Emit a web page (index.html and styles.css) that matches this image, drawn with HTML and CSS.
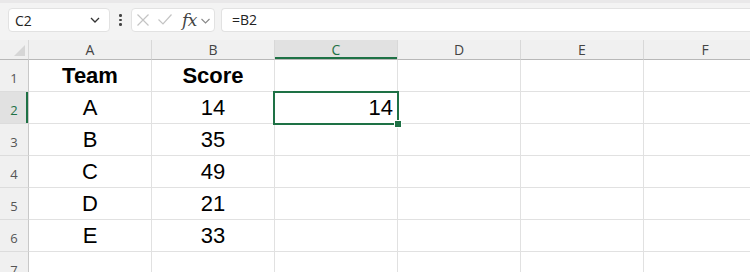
FILE: index.html
```html
<!DOCTYPE html>
<html>
<head>
<meta charset="utf-8">
<link rel="stylesheet" href="styles.css">
</head>
<body>
<div class="app">
  <div class="topbar">
    <div class="namebox">
      <span class="nb-text">C2</span>
      <svg class="chev-dark" width="10" height="6" viewBox="0 0 10 6"><polyline points="1,1 5,5 9,1" fill="none" stroke="#333" stroke-width="1.3"/></svg>
    </div>
    <div class="dots"><span></span><span></span><span></span></div>
    <div class="fxbox">
      <svg class="ico-x" width="12" height="12" viewBox="0 0 12 12"><path d="M0.5 0.5 L11.5 11.5 M11.5 0.5 L0.5 11.5" stroke="#c4c4c4" stroke-width="1.2" fill="none"/></svg>
      <svg class="ico-v" width="14" height="11" viewBox="0 0 14 11"><polyline points="0.5,5.5 5,10 13.5,0.5" stroke="#c4c4c4" stroke-width="1.2" fill="none"/></svg>
      <span class="fx">fx</span>
      <svg class="chev" width="9" height="6" viewBox="0 0 9 6"><polyline points="0.5,1 4.5,5 8.5,1" fill="none" stroke="#888" stroke-width="1.1"/></svg>
    </div>
    <div class="formula">=B2</div>
  </div>
  <div class="sheet">
    <div class="corner"><div class="tri"></div></div>
    <div class="ch">A</div>
    <div class="ch">B</div>
    <div class="ch sel">C</div>
    <div class="ch">D</div>
    <div class="ch">E</div>
    <div class="ch">F</div>

    <div class="rh">1</div>
    <div class="c ctr b">Team</div>
    <div class="c ctr b">Score</div>
    <div class="c"></div><div class="c"></div><div class="c"></div><div class="c"></div>

    <div class="rh sel">2</div>
    <div class="c ctr">A</div>
    <div class="c ctr">14</div>
    <div class="c rt active">14<div class="selbox"></div><div class="handle"></div></div>
    <div class="c"></div><div class="c"></div><div class="c"></div>

    <div class="rh">3</div>
    <div class="c ctr">B</div>
    <div class="c ctr">35</div>
    <div class="c"></div><div class="c"></div><div class="c"></div><div class="c"></div>

    <div class="rh">4</div>
    <div class="c ctr">C</div>
    <div class="c ctr">49</div>
    <div class="c"></div><div class="c"></div><div class="c"></div><div class="c"></div>

    <div class="rh">5</div>
    <div class="c ctr">D</div>
    <div class="c ctr">21</div>
    <div class="c"></div><div class="c"></div><div class="c"></div><div class="c"></div>

    <div class="rh">6</div>
    <div class="c ctr">E</div>
    <div class="c ctr">33</div>
    <div class="c"></div><div class="c"></div><div class="c"></div><div class="c"></div>

    <div class="rh">7</div>
    <div class="c"></div><div class="c"></div><div class="c"></div><div class="c"></div><div class="c"></div><div class="c"></div>
  </div>
</div>
</body>
</html>
```
FILE: styles.css
```css
* { box-sizing: border-box; }
html, body { margin: 0; padding: 0; }
body {
  width: 750px;
  height: 272px;
  overflow: hidden;
  background: #ffffff;
  font-family: "Open Sans", "Noto Sans", sans-serif;
}
.app { width: 750px; height: 272px; overflow: hidden; }

.topbar {
  height: 40px;
  background: #f3f3f3;
  border-top: 3px solid #e9e8e9;
  display: flex;
  align-items: flex-start;
  padding: 5px 0 0 8px;
}
.namebox {
  width: 102px;
  height: 24px;
  background: #fff;
  border: 1px solid #e2e2e2;
  border-radius: 4px;
  display: flex;
  align-items: center;
  justify-content: space-between;
  padding: 0 9px 0 6px;
}
.nb-text { font-size: 14px; color: #222; }
.dots {
  width: 21px;
  height: 24px;
  display: flex;
  flex-direction: column;
  align-items: center;
  justify-content: center;
  gap: 2px;
}
.dots span { width: 2.5px; height: 2.5px; border-radius: 50%; background: #444; }
.fxbox {
  width: 84px;
  height: 24px;
  background: #fff;
  border: 1px solid #e2e2e2;
  border-radius: 4px;
  display: flex;
  align-items: center;
  padding-left: 5px;
}
.ico-x { flex: none; }
.ico-v { flex: none; margin-left: 9px; margin-top: -1px; }
.fx {
  font-family: "DejaVu Serif", "Liberation Serif", serif;
  font-style: italic;
  font-size: 17px;
  line-height: 20px;
  color: #444;
  margin-left: 10px;
  letter-spacing: -0.5px;
}
.chev { margin-left: 4px; margin-top: 1px; }
.formula {
  flex: 1;
  margin-left: 6px;
  height: 24px;
  background: #fff;
  border: 1px solid #e2e2e2;
  border-right: none;
  border-radius: 4px 0 0 4px;
  font-size: 14px;
  color: #222;
  line-height: 22px;
  padding-left: 10px;
}

.sheet {
  display: grid;
  grid-template-columns: 29px repeat(6, 123px);
  grid-template-rows: 20px repeat(7, 32px);
}
.corner {
  background: #f0f0f0;
  border-bottom: 1px solid #b8b8b8;
  border-right: 1px solid #d8d8d8;
  position: relative;
}
.tri {
  position: absolute;
  right: 3px;
  bottom: 3px;
  width: 0;
  height: 0;
  border-left: 11px solid transparent;
  border-bottom: 11px solid #d6d6d6;
}
.ch {
  background: #f0f0f0;
  border-right: 1px solid #d8d8d8;
  border-bottom: 1px solid #b8b8b8;
  font-size: 14px;
  color: #444;
  text-align: center;
  line-height: 19px;
}
.ch.sel {
  background: #e1e1e1;
  color: #1e7145;
  box-shadow: inset 0 -2px 0 #1e7145;
}
.rh {
  background: #f0f0f0;
  border-right: 1px solid #c8c8c8;
  border-bottom: 1px solid #dcdcdc;
  font-size: 13px;
  color: #555;
  display: flex;
  align-items: flex-end;
  justify-content: center;
  padding-bottom: 4px;
}
.rh.sel {
  background: #e1e1e1;
  color: #1e7145;
  box-shadow: inset -2px 0 0 #1e7145;
}
.c {
  border-right: 1px solid #e1e1e1;
  border-bottom: 1px solid #e1e1e1;
  font-family: "Liberation Sans", Arial, sans-serif;
  font-size: 22px;
  line-height: 31px;
  color: #000;
  white-space: nowrap;
}
.ctr { text-align: center; }
.rt { text-align: right; padding-right: 4px; }
.b { font-weight: bold; }
.active { position: relative; }
.selbox {
  position: absolute;
  left: -2px;
  top: -1px;
  right: -2px;
  bottom: -2px;
  border: 2px solid #1e7145;
}
.handle {
  position: absolute;
  right: -4px;
  bottom: -4px;
  width: 6px;
  height: 6px;
  background: #1e7145;
  border: 1px solid #fff;
  box-sizing: content-box;
  margin: -1px;
}
```
